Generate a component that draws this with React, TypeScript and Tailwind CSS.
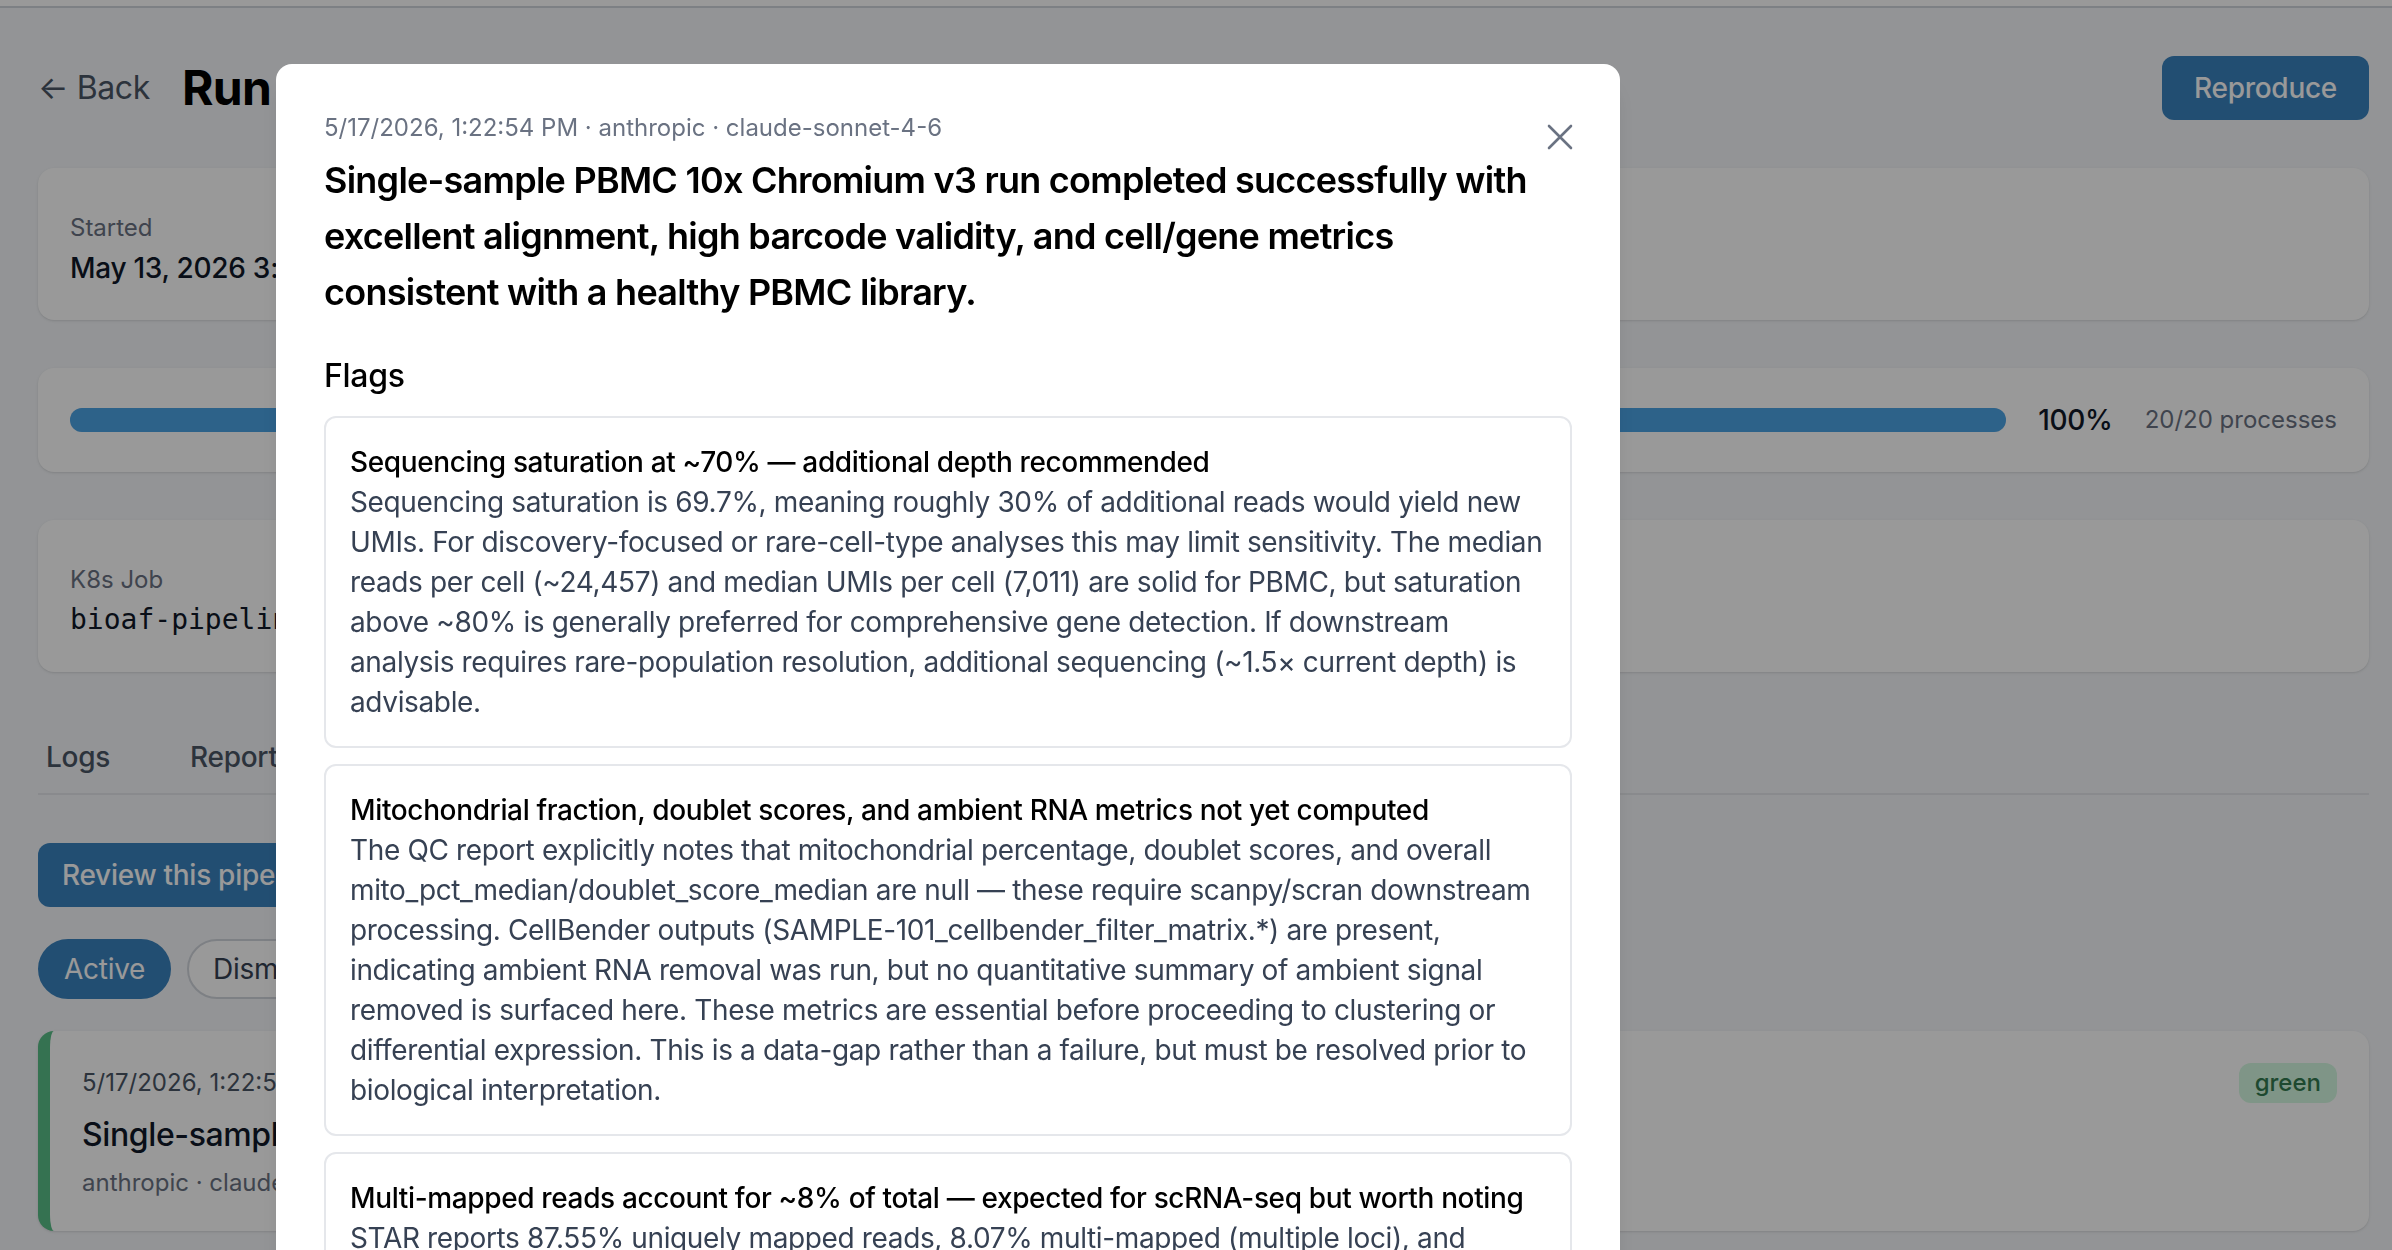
import React from "react";

const flags = [
  {
    title: "Sequencing saturation at ~70% — additional depth recommended",
    body: "Sequencing saturation is 69.7%, meaning roughly 30% of additional reads would yield new UMIs. For discovery-focused or rare-cell-type analyses this may limit sensitivity. The median reads per cell (~24,457) and median UMIs per cell (7,011) are solid for PBMC, but saturation above ~80% is generally preferred for comprehensive gene detection. If downstream analysis requires rare-population resolution, additional sequencing (~1.5× current depth) is advisable.",
  },
  {
    title: "Mitochondrial fraction, doublet scores, and ambient RNA metrics not yet computed",
    body: "The QC report explicitly notes that mitochondrial percentage, doublet scores, and overall mito_pct_median/doublet_score_median are null — these require scanpy/scran downstream processing. CellBender outputs (SAMPLE-101_cellbender_filter_matrix.*) are present, indicating ambient RNA removal was run, but no quantitative summary of ambient signal removed is surfaced here. These metrics are essential before proceeding to clustering or differential expression. This is a data-gap rather than a failure, but must be resolved prior to biological interpretation.",
  },
  {
    title: "Multi-mapped reads account for ~8% of total — expected for scRNA-seq but worth noting",
    body: "STAR reports 87.55% uniquely mapped reads, 8.07% multi-mapped (multiple loci), and 4.38% unmapped. A multi-mapping rate in this range is typical for 10x 3' libraries and does not indicate a problem, but reads from paralogous gene families may be undercounted.",
  },
];

function Field({ label, value, mono }: { label: string; value: string; mono?: boolean }) {
  return (
    <div>
      <div className="text-[24px] leading-[32px] text-gray-500">{label}</div>
      <div
        className={
          mono
            ? "mt-1 text-[28px] leading-[40px] text-gray-900 font-['DejaVu_Sans_Mono',monospace]"
            : "mt-1 text-[28px] leading-[40px] tracking-[-0.28px] font-medium text-gray-900"
        }
      >
        {value}
      </div>
    </div>
  );
}

function RunPage() {
  return (
    <div className="min-h-screen bg-[#f5f7fa]">
      <div className="h-2 border-b-2 border-gray-300 bg-white" />
      <main className="pl-[38px] pr-[23px] pt-12 pb-12">
        <div className="flex h-16 items-center justify-between">
          <div className="flex items-center gap-8">
            <button className="text-[32px] leading-[48px] tracking-[-0.4px] text-gray-600">← Back</button>
            <h1 className="text-[48px] leading-[64px] tracking-[-0.6px] font-bold text-black">Run #a41f3c</h1>
          </div>
          <button className="h-16 rounded-[12px] bg-[#3a83bf] px-8 text-[28px] tracking-[-0.28px] font-medium text-white">
            Reproduce
          </button>
        </div>

        <div className="mt-12 rounded-2xl bg-white px-8 pt-[44px] pb-8 shadow-sm">
          <div className="grid grid-cols-4 gap-8">
            <Field label="Started" value="May 13, 2026 3:14:07 PM" />
            <Field label="Finished" value="May 13, 2026 4:02:51 PM" />
            <Field label="Duration" value="48m 44s" />
          </div>
        </div>

        <div className="mt-12 rounded-2xl bg-white p-8 shadow-sm">
          <div className="flex h-10 items-center gap-8">
            <div className="h-6 flex-1 rounded-full bg-gray-200">
              <div className="h-6 w-full rounded-full bg-[#4ba3e5]" />
            </div>
            <span className="text-[28px] leading-[40px] tracking-[-0.28px] font-medium text-gray-900">100%</span>
            <span className="text-[24px] leading-[32px] text-gray-500">20/20 processes</span>
          </div>
        </div>

        <div className="mt-12 rounded-2xl bg-white px-8 pt-[44px] pb-8 shadow-sm">
          <div className="grid grid-cols-4 gap-8">
            <Field label="K8s Job" value="bioaf-pipeline-7f3c2" mono />
            <Field label="Pipeline" value="nf-core/scrnaseq" />
          </div>
        </div>

        <div className="mt-[49px] flex gap-16 border-b-2 border-gray-200 text-[28px] leading-[40px] tracking-[-0.28px] font-medium text-gray-600">
          <button className="px-2 py-4">Logs</button>
          <button className="px-2 py-4">Report</button>
          <button className="px-2 py-4">AI Review</button>
        </div>

        <button className="mt-12 h-16 rounded-[12px] bg-[#3a83bf] px-6 text-[28px] tracking-[-0.28px] font-medium text-white">
          Review this pipeline run
        </button>

        <div className="mt-8 flex gap-4 text-[28px] leading-[40px] tracking-[-0.28px]">
          <button className="rounded-full border-2 border-[#3a83bf] bg-[#3a83bf] px-6 py-2 text-white">Active</button>
          <button className="rounded-full border-2 border-gray-300 bg-white px-6 py-2 text-gray-700">Dismissed</button>
        </div>

        <div className="mt-8 rounded-2xl border-l-[12px] border-[#59be87] bg-white p-8 shadow-sm">
          <div className="flex items-center justify-between">
            <span className="text-[24px] leading-[32px] text-gray-600">5/17/2026, 1:22:54 PM</span>
            <span className="rounded-[12px] bg-[#d4f9e1] px-4 py-1 text-[24px] leading-[32px] font-medium text-[#337b50]">
              green
            </span>
          </div>
          <div className="mt-2 text-[32px] leading-[48px] tracking-[-0.4px] font-medium text-gray-900">
            Single-sample PBMC 10x Chromium v3 run completed successfully
          </div>
          <div className="mt-2 text-[24px] leading-[32px] text-gray-500">anthropic · claude-sonnet-4-6</div>
        </div>
      </main>
    </div>
  );
}

function ReviewDialog() {
  return (
    <div className="fixed inset-0 overflow-y-auto bg-black/40">
      <div className="relative mt-16 ml-[276px] w-[1344px] rounded-2xl bg-white p-12 shadow-xl">
        <button className="absolute top-[60px] right-[46px] text-gray-500" aria-label="Close">
          <svg width="28" height="26" viewBox="0 0 28 26" fill="none" stroke="currentColor" strokeWidth="2.6" strokeLinecap="round">
            <path d="M3 2 L25 24 M25 2 L3 24" />
          </svg>
        </button>
        <div className="text-[24px] leading-[32px] text-gray-500">
          5/17/2026, 1:22:54 PM · anthropic · claude-sonnet-4-6
        </div>
        <h2 className="mt-2 text-[36px] leading-[56px] tracking-[-0.75px] font-semibold text-black">
          Single-sample PBMC 10x Chromium v3 run completed successfully with excellent alignment, high barcode
          validity, and cell/gene metrics consistent with a healthy PBMC library.
        </h2>
        <h3 className="mt-8 text-[32px] leading-[48px] tracking-[-0.3px] font-medium text-black">Flags</h3>
        <div className="mt-4 flex flex-col gap-4">
          {flags.map((f, i) => (
            <div key={i} className="rounded-[12px] border-2 border-gray-200 p-6 text-[28px] leading-[40px] tracking-[-0.36px]">
              <div className="font-medium text-black">{f.title}</div>
              <p className="text-gray-700">{f.body}</p>
            </div>
          ))}
        </div>
      </div>
    </div>
  );
}

export default function App() {
  return (
    <div className="font-['Inter','Noto_Sans',sans-serif]">
      <RunPage />
      <ReviewDialog />
    </div>
  );
}
